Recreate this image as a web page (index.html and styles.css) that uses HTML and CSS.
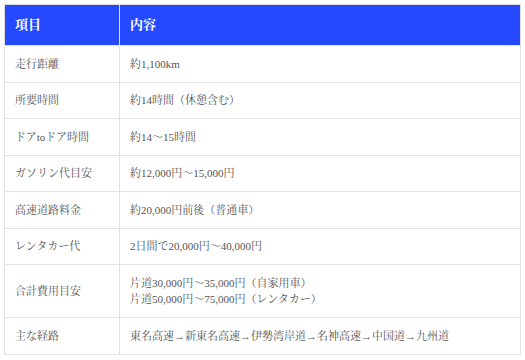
FILE: index.html
```html
<!DOCTYPE html>
<html lang="ja">
<head>
<meta charset="utf-8">
<link rel="stylesheet" href="styles.css">
</head>
<body>
<table class="info">
  <thead>
    <tr><th class="c1">項目</th><th>内容</th></tr>
  </thead>
  <tbody>
    <tr><td>走行距離</td><td>約1,100km</td></tr>
    <tr><td>所要時間</td><td>約14時間（休憩含む）</td></tr>
    <tr><td>ドアtoドア時間</td><td>約14〜15時間</td></tr>
    <tr><td>ガソリン代目安</td><td>約12,000円〜15,000円</td></tr>
    <tr><td>高速道路料金</td><td>約20,000円前後（普通車）</td></tr>
    <tr><td>レンタカー代</td><td>2日間で20,000円〜40,000円</td></tr>
    <tr><td>合計費用目安</td><td>片道30,000円〜35,000円（自家用車）<br>片道50,000円〜75,000円（レンタカー）</td></tr>
    <tr><td>主な経路</td><td>東名高速→新東名高速→伊勢湾岸道→名神高速→中国道→九州道</td></tr>
  </tbody>
</table>
</body>
</html>
```
FILE: styles.css
```css
html, body { background: #fff; }
body {
  margin: 4px;
  font-family: "Liberation Serif", "Noto Serif CJK JP", "Noto Sans CJK JP", serif;
  color: #555;
}
.info {
  width: 517px;
  border-collapse: collapse;
  border: 1px solid #ddd;
}
.info th {
  background: #2549ff;
  color: #fff;
  font-weight: bold;
  font-size: 13px;
  line-height: 20px;
  text-align: left;
  padding: 10px 10px;
  border-left: 1px solid #dde;
}
.info th.c1 { border-left: none; width: 94px; }
.info td {
  font-size: 11px;
  line-height: 16.5px;
  padding: 9.5px 10px;
  border: 1px solid #e3e3e3;
  vertical-align: middle;
}
```
